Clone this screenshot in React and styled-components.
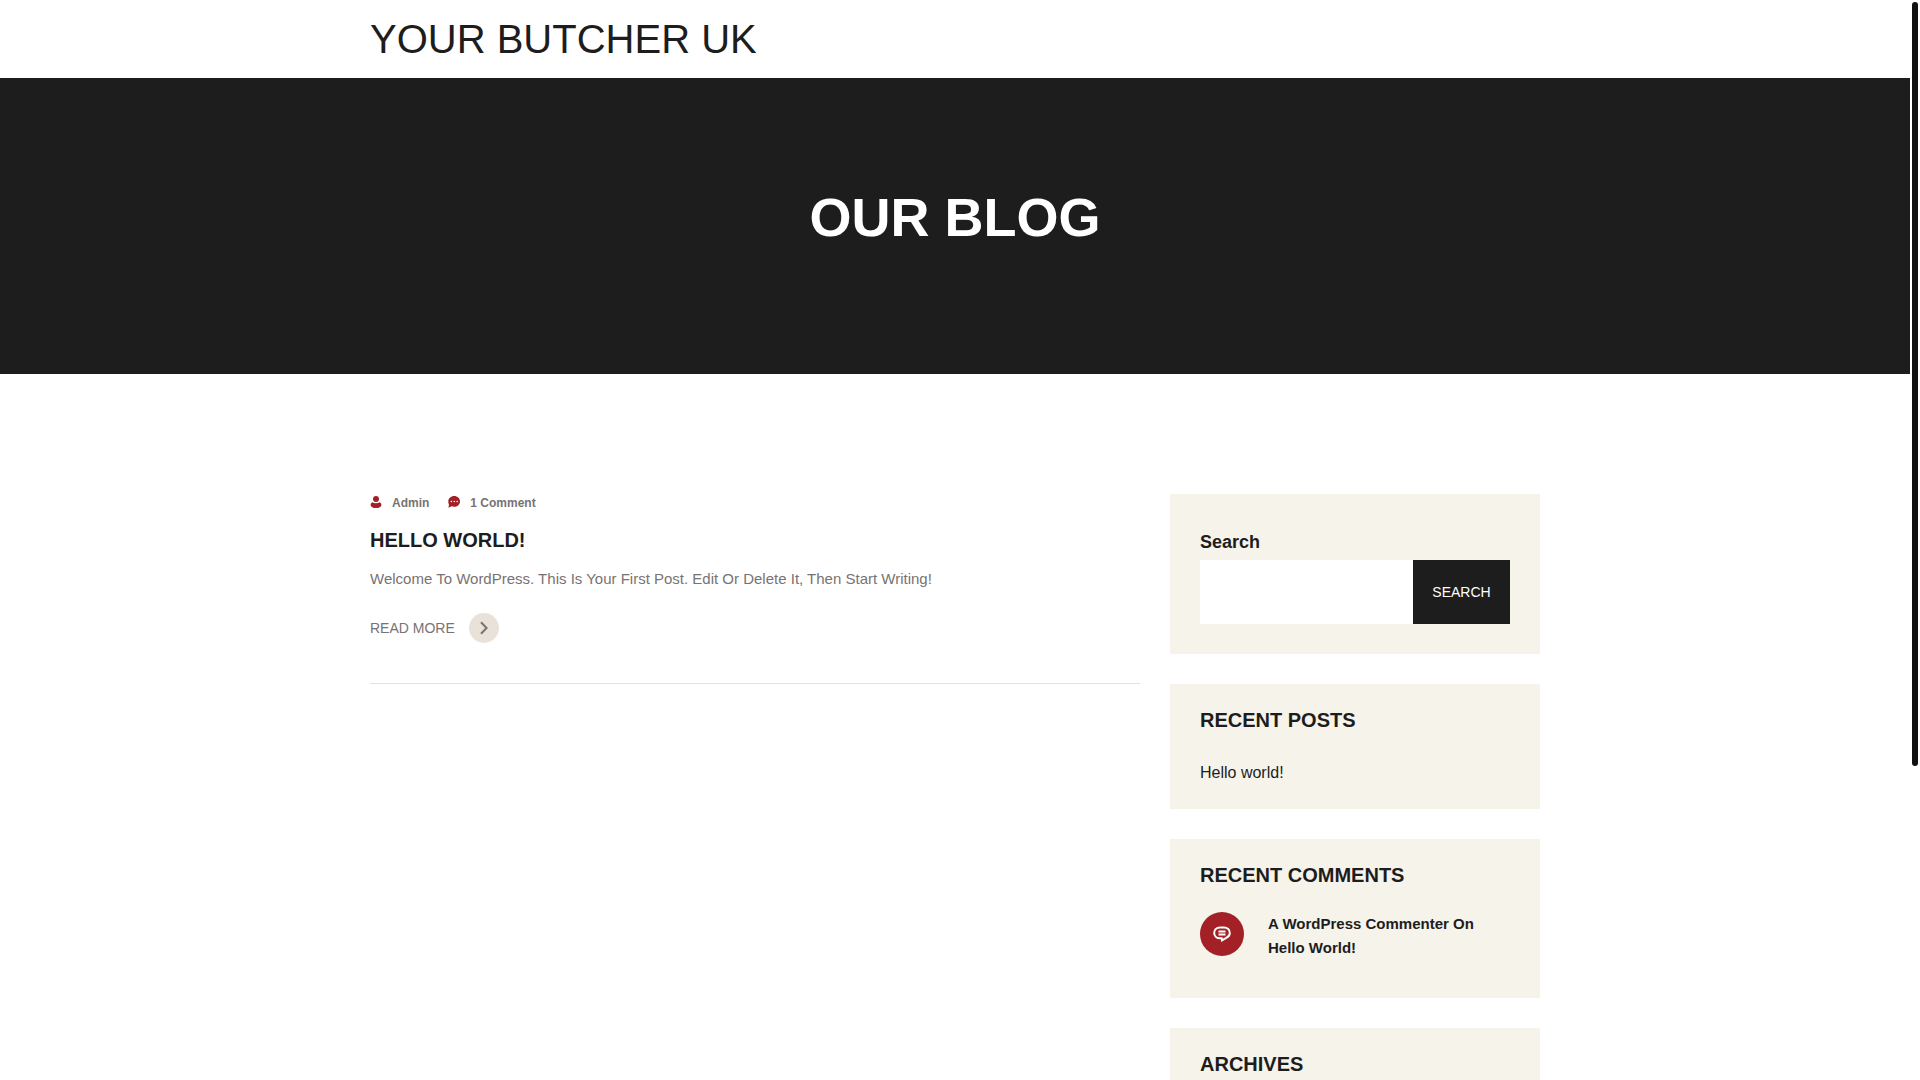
import { useState } from 'react';
import styled, { createGlobalStyle } from 'styled-components';

const ink = '#1d1d1d';
const muted = '#787373';
const red = '#a32126';
const cream = '#f6f3eb';
const sand = '#eae1d9';

const GlobalStyle = createGlobalStyle`
  * {
    box-sizing: border-box;
  }

  body {
    margin: 0;
    background: #fff;
    color: ${ink};
    font-family: 'Liberation Sans', Arial, sans-serif;
    font-size: 16px;
  }

  h1, h2, h3, p, ul {
    margin: 0;
    padding: 0;
  }

  a {
    color: inherit;
    text-decoration: none;
  }
`;

const Shell = styled.div`
  display: flex;
  height: 100vh;
`;

const Page = styled.div`
  flex: 1;
  min-width: 0;
  overflow-y: auto;
  scrollbar-width: none;
`;

const ScrollRail = styled.div`
  flex: none;
  width: 10px;
  padding: 2px;
`;

const ScrollThumb = styled.div`
  height: 71%;
  border-radius: 5px;
  background: #111;
`;

const Container = styled.div`
  max-width: 1200px;
  margin: 0 auto;
  padding: 0 15px;
`;

const Header = styled.header`
  padding: 15px 0;
`;

const SiteName = styled.a`
  display: block;
  font-size: 40px;
  line-height: 48px;
  text-transform: uppercase;
`;

const Banner = styled.section`
  padding: 103px 15px 121px;
  background: ${ink};
  color: #fff;
  text-align: center;
`;

const BannerTitle = styled.h1`
  font-size: 54px;
  line-height: 72px;
  text-transform: uppercase;
`;

const Columns = styled(Container)`
  display: grid;
  grid-template-columns: minmax(0, 1fr) 370px;
  gap: 30px;
  align-items: start;
  padding-top: 120px;
  padding-bottom: 120px;
`;

const Post = styled.article`
  padding-bottom: 40px;
  border-bottom: 1px solid ${sand};
`;

const Meta = styled.ul`
  display: flex;
  gap: 19px;
  list-style: none;
  color: ${muted};
  font-size: 12px;
  font-weight: 700;
  line-height: 18px;
`;

const MetaItem = styled.li`
  display: flex;
  align-items: center;
  gap: 10px;

  svg {
    margin-bottom: 2px;
    fill: ${red};
  }
`;

const Heading = styled.h2`
  font-size: 20px;
  line-height: 28px;
  text-transform: uppercase;
`;

const PostTitle = styled(Heading)`
  margin: 14px 0 10px;
`;

const Excerpt = styled.p`
  color: ${muted};
  font-size: 15px;
  line-height: 30px;
`;

const ReadMore = styled.a`
  display: inline-flex;
  align-items: center;
  gap: 14px;
  margin-top: 19px;
  color: ${muted};
  font-size: 14px;
  text-transform: uppercase;
  vertical-align: top;
`;

const Round = styled.span`
  display: flex;
  flex: none;
  align-items: center;
  justify-content: center;
  width: ${({ $size }) => $size}px;
  height: ${({ $size }) => $size}px;
  border-radius: 50%;
  background: ${({ $color }) => $color};
`;

const Sidebar = styled.aside`
  display: flex;
  flex-direction: column;
  gap: 30px;
`;

const Widget = styled.section`
  padding: 22px 30px 20px;
  background: ${cream};
`;

const WidgetTitle = styled(Heading)`
  margin-bottom: 23px;
`;

const WidgetLink = styled.a`
  display: block;
  line-height: 32px;
`;

const SearchWidget = styled(Widget)`
  padding: 30px;
`;

const SearchLabel = styled.label`
  display: block;
  font-size: 18px;
  font-weight: 700;
  line-height: 36px;
`;

const SearchRow = styled.div`
  display: flex;
  height: 64px;
`;

const SearchInput = styled.input`
  flex: 1;
  min-width: 0;
  padding: 0 20px;
  border: 0;
  background: #fff;
  font: inherit;
`;

const SearchButton = styled.button`
  width: 97px;
  padding: 0;
  border: 0;
  background: ${ink};
  color: #fff;
  font-family: inherit;
  font-size: 14px;
  text-transform: uppercase;
  cursor: pointer;
`;

const Comment = styled.div`
  display: flex;
  gap: 24px;
  margin-bottom: 18px;
  font-size: 15px;
  font-weight: 700;
  line-height: 24px;
`;

function UserIcon() {
  return (
    <svg width="12" height="12" viewBox="0 0 12 12" aria-hidden="true">
      <circle cx="6" cy="3" r="3" />
      <path d="M2.4 6.3C3.4 7 4.7 7.3 6 7.3s2.6-.3 3.6-1c1.1.5 1.8 1.5 1.8 2.6C11.4 10.9 9 12 6 12S.6 10.9.6 8.9c0-1.1.7-2.1 1.8-2.6z" />
    </svg>
  );
}

function CommentIcon() {
  return (
    <svg width="12" height="12" viewBox="0 0 12 12" aria-hidden="true">
      <path
        fillRule="evenodd"
        d="M6.2 0C9.4 0 12 2.4 12 5.4s-2.6 5.3-5.8 5.3c-.9 0-1.7-.2-2.5-.5L.2 11.7c.6-1 .8-2 .7-3.2C.5 7.6.3 6.500.3 5.400.3 2.400 3 0 6.200 0zM3.400 4.700a.8.8 0 100 1.600.8.8 0 000-1.600zm2.900 0a.8.8 0 100 1.600.8.8 0 000-1.600zm2.900 0a.8.8 0 100 1.600.8.8 0 000-1.600z"
      />
    </svg>
  );
}

function ArrowIcon() {
  return (
    <svg width="8" height="14" viewBox="0 0 8 14" fill="none" stroke={muted} strokeWidth="2" aria-hidden="true">
      <path d="M1 1.200L6.600 7 1 12.800" />
    </svg>
  );
}

function SpeechIcon() {
  return (
    <svg width="18" height="16" viewBox="0 0 18 16" fill="none" stroke="#fff" strokeWidth="2" aria-hidden="true">
      <path d="M8.700 12.300H7C3.600 12.300 1.200 9.900 1.200 6.900S3.600 1.400 7 1.400h4c3.400 0 5.800 2.500 5.800 5.500 0 2.400-1.500 4-3.600 5L9 14.400z" />
      <path d="M5.500 5.400h7M5.500 8.500h7" />
    </svg>
  );
}

function SearchForm() {
  const [query, setQuery] = useState('');

  return (
    <form role="search" onSubmit={(event) => event.preventDefault()}>
      <SearchLabel htmlFor="blog-search">Search</SearchLabel>
      <SearchRow>
        <SearchInput
          id="blog-search"
          type="search"
          value={query}
          onChange={(event) => setQuery(event.target.value)}
        />
        <SearchButton type="submit">Search</SearchButton>
      </SearchRow>
    </form>
  );
}

export default function App() {
  return (
    <Shell>
      <GlobalStyle />
      <Page>
        <Header>
          <Container>
            <SiteName href="#">Your Butcher UK</SiteName>
          </Container>
        </Header>
        <Banner>
          <BannerTitle>Our Blog</BannerTitle>
        </Banner>
        <Columns as="main">
          <Post>
            <Meta>
              <MetaItem>
                <UserIcon />
                <a href="#">Admin</a>
              </MetaItem>
              <MetaItem>
                <CommentIcon />
                <a href="#">1 Comment</a>
              </MetaItem>
            </Meta>
            <PostTitle>
              <a href="#">Hello world!</a>
            </PostTitle>
            <Excerpt>
              Welcome To WordPress. This Is Your First Post. Edit Or Delete It, Then Start Writing!
            </Excerpt>
            <ReadMore href="#">
              Read More
              <Round $size={30} $color={sand}>
                <ArrowIcon />
              </Round>
            </ReadMore>
          </Post>
          <Sidebar>
            <SearchWidget>
              <SearchForm />
            </SearchWidget>
            <Widget>
              <WidgetTitle>Recent Posts</WidgetTitle>
              <WidgetLink href="#">Hello world!</WidgetLink>
            </Widget>
            <Widget>
              <WidgetTitle>Recent Comments</WidgetTitle>
              <Comment>
                <Round $size={44} $color={red}>
                  <SpeechIcon />
                </Round>
                <p>
                  <a href="#">A WordPress Commenter</a> On <a href="#">Hello World!</a>
                </p>
              </Comment>
            </Widget>
            <Widget>
              <WidgetTitle>Archives</WidgetTitle>
            </Widget>
          </Sidebar>
        </Columns>
      </Page>
      <ScrollRail aria-hidden="true">
        <ScrollThumb />
      </ScrollRail>
    </Shell>
  );
}
